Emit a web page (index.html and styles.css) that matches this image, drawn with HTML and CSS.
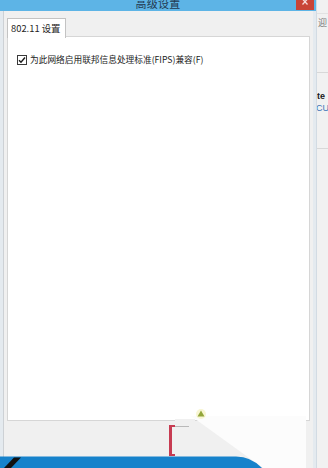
FILE: index.html
```html
<!DOCTYPE html>
<html lang="zh-CN">
<head>
<meta charset="utf-8">
<title>高级设置</title>
<link rel="stylesheet" href="styles.css">
</head>
<body>
<div class="screen">
  <div class="dialog">
    <div class="titlebar">
      <span></span>
      <span class="title">高级设置</span>
      <span class="close-wrap"><span class="close"><svg width="18" height="10" viewBox="0 0 18 10"><path d="M6.5 -1 L11.5 4.5 M11.5 -1 L6.5 4.5" stroke="#f6dada" stroke-width="1.3" fill="none"/></svg></span></span>
    </div>
    <div class="frame">
      <div class="content">
        <div class="tabs"><div class="tab">802.11 设置</div></div>
        <div class="panel">
          <label class="option">
            <span class="checkbox"><svg width="8" height="8" viewBox="0 0 8 8"><path d="M1 4.2 L3 6.3 L7 1.5" stroke="#1c1c1c" stroke-width="1.4" fill="none"/></svg></span>
            <span class="option-text">为此网络启用联邦信息处理标准(FIPS)兼容(F)</span>
          </label>
        </div>
        <div class="footer"></div>
      </div>
    </div>
  </div>
  <div class="behind">
    <div class="behind-head">迎</div>
    <div class="behind-section">
      <div class="behind-strong">te</div>
      <div class="behind-link">CU</div>
    </div>
    <div class="behind-rest"></div>
  </div>
  <svg class="overlay" width="328" height="468" viewBox="0 0 328 468">
    <rect x="175" y="419" width="20" height="4" fill="#f0f0f0"/>
    <polygon points="191,416 306,416 306,468 263,468" fill="#fcfcfc"/>
    <circle cx="201" cy="414" r="5" fill="#f6f4c8" opacity="0.8"/>
    <polygon points="197.5,416.5 201,410.5 204.5,416.5" fill="#93a63a"/>
    <line x1="175" y1="426.5" x2="189" y2="426.5" stroke="#b9b9b9" stroke-width="1"/>
    <rect x="169" y="425" width="3" height="31" fill="#c73c52"/>
    <rect x="169" y="425" width="6" height="2" fill="#c73c52"/>
    <rect x="169" y="454" width="6" height="2" fill="#c73c52"/>
    <path d="M0 456.5 H236 Q251 456.5 262 468 H0 Z" fill="#1682cb"/>
    <polygon points="4,468 14,457.5 21,457.5 11,468" fill="#111"/>
  </svg>
</div>
</body>
</html>
```
FILE: styles.css
```css
* { box-sizing: border-box; }
html, body { margin: 0; padding: 0; }
body {
  background: #f0f0f0;
  font-family: "Noto Sans CJK SC", "Noto Sans", sans-serif;
}
.screen {
  position: relative;
  width: 328px;
  height: 468px;
  overflow: hidden;
  display: flex;
  background: #f2f2f2;
}
.dialog {
  width: 316px;
  height: 468px;
  display: flex;
  flex-direction: column;
  background: #e4eaef;
}
.titlebar {
  height: 11px;
  flex: none;
  background: #5db4e6;
  display: grid;
  grid-template-columns: 1fr auto 1fr;
  overflow: hidden;
}
.title {
  font-size: 11px;
  line-height: 11px;
  margin-top: -2px;
  color: #23384f;
  letter-spacing: 0.3px;
}
.close-wrap {
  display: flex;
  justify-content: flex-end;
  padding-right: 2px;
}
.close {
  width: 18px;
  height: 10px;
  background: #c94437;
  display: block;
}
.close svg { display: block; }
.frame {
  flex: 1;
  display: flex;
  padding: 0 3px;
}
.content {
  flex: 1;
  background: #f0f0f0;
  border-left: 1px solid #cdd1d5;
  padding: 7px 3px 0 3px;
  display: flex;
  flex-direction: column;
}
.tabs {
  display: flex;
  height: 19px;
  flex: none;
  position: relative;
  z-index: 1;
  margin-bottom: -1px;
}
.tab {
  height: 20px;
  background: #ffffff;
  border: 1px solid #c3c3c3;
  border-bottom: none;
  padding: 0 5px 0 3px;
  font-size: 9.4px;
  line-height: 18px;
  color: #1e1e1e;
  white-space: nowrap;
}
.panel {
  height: 385px;
  flex: none;
  background: #ffffff;
  border: 1px solid #d6d6d6;
  padding: 17px 9px 0 9px;
}
.option {
  display: flex;
  align-items: center;
  gap: 3px;
  height: 11px;
}
.checkbox {
  width: 10px;
  height: 10px;
  border: 1px solid #3a3a3a;
  background: #fff;
  display: flex;
  align-items: center;
  justify-content: center;
  flex: none;
}
.checkbox svg { display: block; }
.option-text {
  font-size: 8.7px;
  line-height: 11px;
  color: #222;
  white-space: nowrap;
}
.footer { flex: 1; }
.behind {
  flex: 1;
  display: flex;
  flex-direction: column;
  background: #f1f1f1;
  border-left: 1px solid #d2dbe3;
  overflow: hidden;
}
.behind-head {
  margin-top: 13px;
  border-top: 1px solid #e2e2e2;
  height: 59px;
  padding-top: 4px;
  font-size: 9px;
  line-height: 10px;
  color: #7a7a7a;
  padding-left: 1px;
  white-space: nowrap;
}
.behind-section {
  border-top: 1px solid #d8d8d8;
  height: 76px;
  padding-top: 18px;
  white-space: nowrap;
}
.behind-strong {
  font-family: "Liberation Sans", sans-serif;
  font-size: 9px;
  line-height: 11px;
  font-weight: bold;
  color: #1a1a1a;
}
.behind-link {
  font-family: "Liberation Sans", sans-serif;
  font-size: 9px;
  line-height: 13px;
  color: #3c72b6;
  margin-left: -1px;
}
.behind-rest {
  flex: 1;
  border-top: 1px solid #d8d8d8;
}
.overlay {
  position: absolute;
  left: 0;
  top: 0;
  pointer-events: none;
}
```
